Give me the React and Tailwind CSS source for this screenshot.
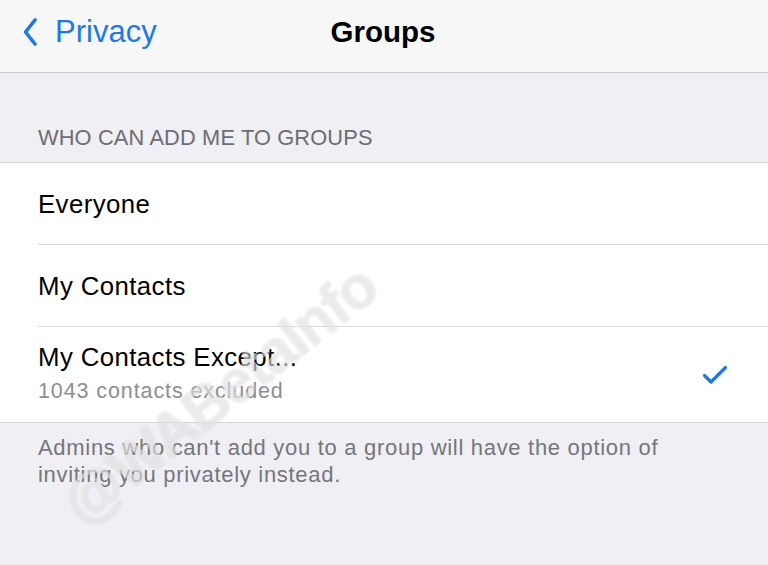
import React from 'react'

const font = { fontFamily: '"Liberation Sans", Arial, sans-serif' }

const options = [
  { id: 'everyone', label: 'Everyone' },
  { id: 'contacts', label: 'My Contacts' },
  { id: 'except', label: 'My Contacts Except...', sub: '1043 contacts excluded', selected: true },
]

const Chevron = () => (
  <svg width="14" height="28" viewBox="0 0 14 28" fill="none">
    <path d="M12 2 L2.5 14 L12 26" stroke="#1f7ae0" strokeWidth="3.6" strokeLinecap="round" strokeLinejoin="round" />
  </svg>
)

const Check = () => (
  <svg width="26" height="20" viewBox="0 0 26 20" fill="none">
    <path d="M2.5 10.5 L9 17 L23.5 2.5" stroke="#1f7ae0" strokeWidth="3.2" strokeLinecap="round" strokeLinejoin="round" />
  </svg>
)

const App = () => {
  return (
    <div className="relative w-[768px] h-[565px] overflow-hidden bg-[#efeff4]" style={font}>
      {/* nav bar */}
      <div className="h-[73px] bg-[#f7f7f7] border-b border-[#c8c7cc] flex items-center relative">
        <div className="flex items-center pl-[23px] gap-[18px] text-[#1f7ae0] text-[31px] pb-[9px]">
          <Chevron />
          <span className="leading-none">Privacy</span>
        </div>
        <div className="absolute left-0 right-0 top-0 h-[72px] flex items-center justify-center pb-[9px] pr-[2px]">
          <span className="text-[29.5px] font-bold text-black leading-none">Groups</span>
        </div>
      </div>

      {/* section header */}
      <div className="h-[89px] flex items-end pl-[38px] pb-[13px]">
        <span className="text-[21.8px] tracking-[0.15px] text-[#6d6d72] leading-none">WHO CAN ADD ME TO GROUPS</span>
      </div>

      {/* options */}
      <div className="bg-white border-t border-b border-[#d8d8dc]">
        {options.map((o, i) => (
          <div key={o.id} className="pl-[38px]">
            <div className={`flex items-center pr-[40px] ${i < options.length - 1 ? 'border-b border-[#dcdce0]' : ''} ${o.sub ? 'h-[95px]' : 'h-[82px]'}`}>
              <div className="flex-1">
                <div className={`text-[25.8px] tracking-[0.4px] text-black leading-none ${o.sub ? 'mt-[-2px]' : 'mt-[2px]'}`}>{o.label}</div>
                {o.sub && <div className="text-[21.5px] tracking-[0.9px] text-[#8e8e93] leading-none mt-[10px]">{o.sub}</div>}
              </div>
              {o.selected && <Check />}
            </div>
          </div>
        ))}
      </div>

      {/* footer note */}
      <p className="pl-[38px] pt-[11px] max-w-[700px] text-[22px] tracking-[0.7px] leading-[27px] text-[#76767b]">
        Admins who can't add you to a group will have the option of inviting you privately instead.
      </p>

      {/* watermark */}
      <div className="absolute left-[10px] top-[350px] w-[420px] text-center pointer-events-none -rotate-[38deg]">
        <span className="text-[60px] font-bold text-white/50 tracking-tight" style={{ textShadow: '0 0 2px rgba(120,120,120,0.3)' }}>@WABetaInfo</span>
      </div>
    </div>
  )
}

export default App
